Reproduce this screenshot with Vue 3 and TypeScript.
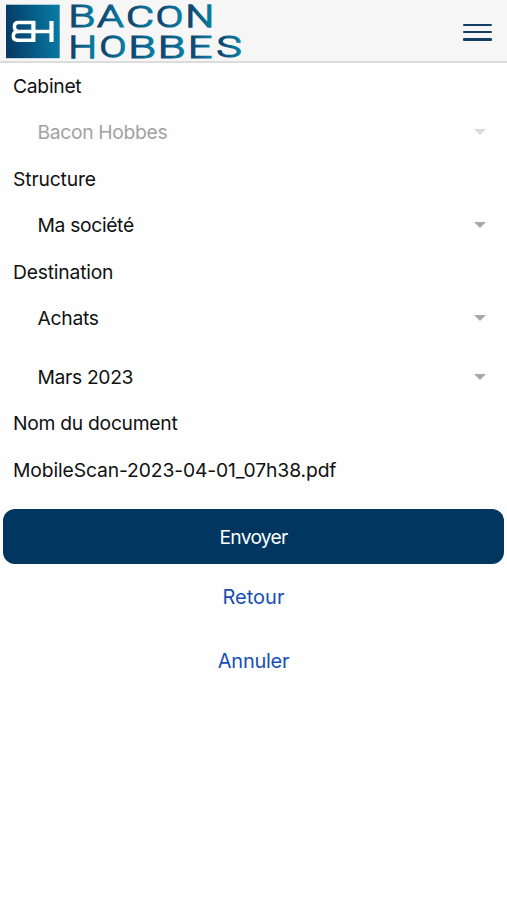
<script setup lang="ts">
import { ref } from 'vue'

interface Field {
  label: string
  selects: { value: string; disabled?: boolean; cls: string }[]
  cls: string
}

interface Letter {
  char: string
  left: number
  right: number
  baseline: number
}

const fields = ref<Field[]>([
  { label: 'Cabinet', cls: 'cabinet', selects: [{ value: 'Bacon Hobbes', disabled: true, cls: 'firm' }] },
  { label: 'Structure', cls: 'structure', selects: [{ value: 'Ma société', cls: 'company' }] },
  {
    label: 'Destination',
    cls: 'destination',
    selects: [
      { value: 'Achats', cls: 'category' },
      { value: 'Mars 2023', cls: 'month' },
    ],
  },
])

const wordmark: Letter[] = [
  { char: 'B', left: 71, right: 94, baseline: 28 },
  { char: 'A', left: 96.5, right: 124.5, baseline: 28 },
  { char: 'C', left: 128, right: 152.5, baseline: 28 },
  { char: 'O', left: 157, right: 182, baseline: 28 },
  { char: 'N', left: 188, right: 211.5, baseline: 28 },
  { char: 'H', left: 71, right: 94.5, baseline: 58.3 },
  { char: 'O', left: 100.5, right: 125, baseline: 58.3 },
  { char: 'B', left: 131, right: 154.5, baseline: 58.3 },
  { char: 'B', left: 160.5, right: 184, baseline: 58.3 },
  { char: 'E', left: 190.5, right: 212, baseline: 58.3 },
  { char: 'S', left: 217, right: 241, baseline: 58.3 },
]

// Stretches each letter so that its ink fills the slot it has in the wordmark.
const outline = 1.5
const capHeight = 23.4
const measure = document.createElement('canvas').getContext('2d')!
measure.font = '300 300px Roboto'
function fit(l: Letter): string {
  const m = measure.measureText(l.char)
  const inkLeft = -m.actualBoundingBoxLeft / 10
  const inkTop = m.actualBoundingBoxAscent / 10
  const inkBottom = m.actualBoundingBoxDescent / 10
  const inkWidth = (m.actualBoundingBoxRight + m.actualBoundingBoxLeft) / 10
  const sx = (l.right - l.left - outline) / inkWidth
  const sy = (capHeight - outline) / (inkTop + inkBottom)
  const x = l.left + outline / 2 - inkLeft * sx
  const y = l.baseline - outline / 2 - inkBottom * sy
  return `translate(${x} ${y}) scale(${sx} ${sy})`
}
</script>

<template>
  <div class="screen">
    <header class="bar">
      <svg class="logo" width="250" height="60" viewBox="0 0 250 60" role="img" aria-label="Bacon Hobbes">
        <defs>
          <linearGradient id="tile" x1="0" y1="0.3" x2="1" y2="0.2">
            <stop offset="0" stop-color="#063b67" />
            <stop offset="1" stop-color="#087ca6" />
          </linearGradient>
          <linearGradient id="ink" x1="0" y1="0" x2="1" y2="0">
            <stop offset="0.08" stop-color="#10416a" />
            <stop offset="0.92" stop-color="#087fa5" />
          </linearGradient>
        </defs>
        <rect x="6" y="4.7" width="53.7" height="53.5" fill="url(#tile)" />
        <g fill="none" stroke="#fff" stroke-width="3.5">
          <path d="M35 22.6H18.4Q14.4 22.6 14.4 26.6Q14.4 31.4 18.5 31.4Q13.3 31.4 13.3 36Q13.3 40.2 17.6 40.2H35" />
          <path d="M18 31.4H52" />
          <path d="M33.4 20.9V41.9M51.5 20.9V41.9" stroke-width="4.2" />
        </g>
        <text
          v-for="(l, i) in wordmark"
          :key="i"
          class="letter"
          fill="url(#ink)"
          stroke="url(#ink)"
          :stroke-width="outline"
          :transform="fit(l)"
        >{{ l.char }}</text>
      </svg>
      <button class="menu" aria-label="Menu">
        <span class="line"></span>
        <span class="line"></span>
        <span class="line"></span>
      </button>
    </header>

    <main class="form">
      <section v-for="f in fields" :key="f.label" class="field">
        <div class="row"><span :class="f.cls">{{ f.label }}</span></div>
        <div class="selects">
          <div v-for="s in f.selects" :key="s.value" class="row select" :class="{ disabled: s.disabled }">
            <span :class="s.cls">{{ s.value }}</span>
            <svg class="caret" width="12" height="6" viewBox="0 0 12 6"><path d="M0 0H12L6 6Z" fill="currentColor" /></svg>
          </div>
        </div>
      </section>
      <section class="field">
        <div class="row"><span class="docname">Nom du document</span></div>
        <div class="row"><span class="file">MobileScan-2023-04-01_07h38.pdf</span></div>
      </section>
    </main>

    <footer class="actions">
      <button class="send">Envoyer</button>
      <button class="link back">Retour</button>
      <button class="link cancel">Annuler</button>
    </footer>
  </div>
</template>

<style>
body {
  background: #fff;
}
</style>

<style scoped>
.screen {
  min-height: 900px;
  background: #fefefe;
  color: #111;
  font-family: Inter, 'Liberation Sans', sans-serif;
  font-size: 19.3px;
  letter-spacing: -0.28px;
}
.bar {
  box-sizing: border-box;
  height: 62.7px;
  display: flex;
  justify-content: space-between;
  align-items: flex-start;
  background: #f6f6f6;
  border-bottom: 2px solid #dcdcdc;
}
.logo {
  display: block;
  overflow: visible;
}
.letter {
  font: 300 30px Roboto, sans-serif;
  letter-spacing: 0;
  vector-effect: non-scaling-stroke;
}
button {
  border: 0;
  padding: 0;
  background: none;
  font: inherit;
  letter-spacing: inherit;
}
.menu {
  display: flex;
  flex-direction: column;
  gap: 5px;
  padding: 23.5px 15px 0 0;
}
.line {
  width: 29px;
  height: 2.4px;
  border-radius: 1px;
  background: #123f65;
}
.row {
  height: 46.5px;
  display: flex;
  align-items: center;
  padding: 0 13px;
  white-space: nowrap;
}
.structure {
  letter-spacing: -0.15px;
}
.firm {
  letter-spacing: -0.33px;
}
.company,
.month {
  letter-spacing: -0.34px;
}
.file {
  letter-spacing: -0.12px;
}
.destination {
  letter-spacing: -0.2px;
}
.selects {
  display: flex;
  flex-direction: column;
  gap: 12px;
}
.select {
  justify-content: space-between;
  padding: 0 21px 0 37.5px;
}
.disabled {
  color: #a2a2a2;
}
.caret {
  color: #a9a9a9;
}
.disabled .caret {
  color: #dcdcdc;
}
.actions {
  display: flex;
  flex-direction: column;
  padding: 16px 3px 0;
}
.send {
  height: 55px;
  margin-bottom: 1.4px;
  border-radius: 12px;
  background: #00365f;
  color: #fff;
  letter-spacing: -0.75px;
}
.link {
  height: 63.5px;
  color: #1750b4;
  font-size: 20px;
}
.back {
  letter-spacing: 0;
}
</style>
